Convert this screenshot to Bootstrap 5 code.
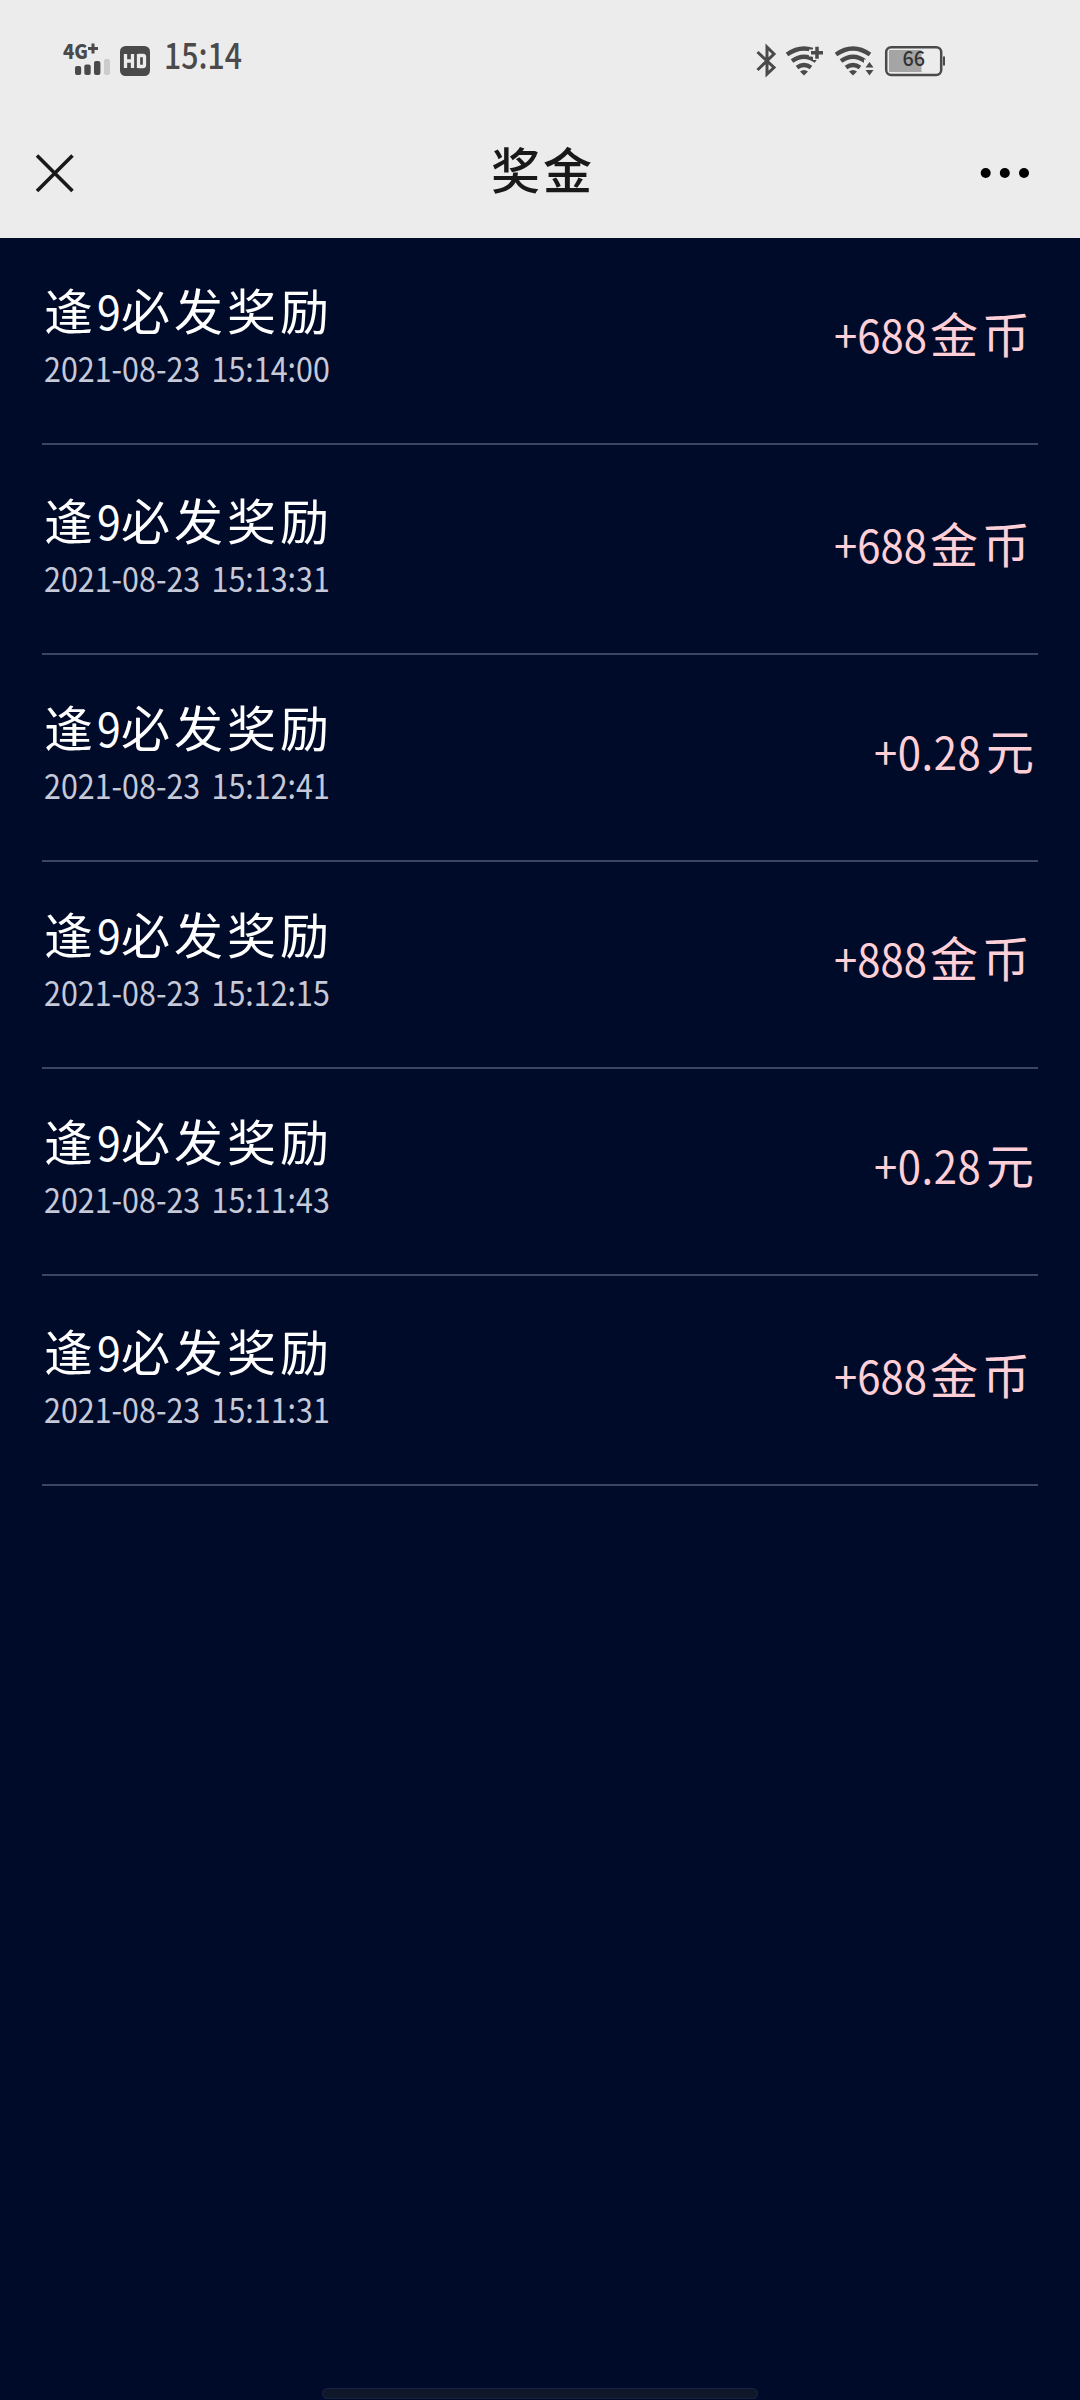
<!DOCTYPE html>
<html lang="zh-CN">
<head>
<meta charset="utf-8">
<meta name="viewport" content="width=device-width, initial-scale=1">
<title>奖金</title>
<link href="https://cdn.jsdelivr.net/npm/bootstrap@5.3.0/dist/css/bootstrap.min.css" rel="stylesheet">
<style>
body{background:#000b2a;font-family:"Noto Sans CJK SC",sans-serif;color:#fff;height:2400px;overflow:hidden}
svg{overflow:visible}
.top-area{background:#ececec;height:238px;color:#191919}
.status-row{height:120px;padding:0 135px 0 60px}
.nav-row{height:106px;padding:0 50px 0 35px}
.nav-title{font-size:49px;letter-spacing:3px;font-weight:500;line-height:60px;padding-left:32px;margin-top:-11px}
.entry{height:207px;margin:0 42px;border-bottom:2px solid #3b4460;padding-top:41px}
.entry-tall{height:210px;padding-top:44px}
.han{font-size:49px;letter-spacing:4px}
.entry-title{font-size:46px;line-height:60px;padding-left:2px}
.nine{display:inline-block;width:24px}
.nine b,.num b{display:inline-block;font-weight:400;transform:scaleX(.93);transform-origin:left}
.entry-time{font-size:34px;line-height:40px;color:#c5c9d8;margin-top:8px;padding-left:2px}
.entry-time b{display:inline-block;font-weight:400;transform-origin:left;transform:scaleX(.895);white-space:pre;word-spacing:5px}
.amount{color:#ffcfd7;font-size:45px;line-height:60px;margin-top:23px}
.amount .han{font-size:48px}
.num{display:inline-block}
.w-coin{width:96px;margin-left:-1px}
.w-coin + .han{margin-right:4px}
.w-yuan{width:112px}
.w-yuan b{letter-spacing:.6px}
.home-bar{left:323px;top:2389px;width:434px;height:9px;border-radius:5px;background:#0f172b;box-shadow:0 0 0 1px #1a2242}
</style>
<script src="https://cdn.jsdelivr.net/npm/bootstrap@5.3.0/dist/js/bootstrap.bundle.min.js"></script>
</head>
<body>
<header class="top-area">
  <div class="status-row d-flex justify-content-between">
    <svg width="190" height="120" viewBox="60 0 190 120" fill="#4a4a4a" font-family="Noto Sans CJK SC, sans-serif">
      <text x="63" y="59" font-size="20" font-weight="900" textLength="25" lengthAdjust="spacingAndGlyphs">4G</text>
      <path d="M88 48.500h10M93 43.500v10" stroke="#4a4a4a" stroke-width="3"/>
      <rect x="75" y="66" width="6.200" height="9" rx="2"/><rect x="84.300" y="64.500" width="6.400" height="10.500" rx="2"/><rect x="94" y="61" width="6.400" height="14" rx="2"/><rect x="104" y="59" width="6" height="16" rx="2" fill="#ccc"/>
      <rect x="120" y="46" width="30" height="30" rx="5.500"/>
      <path d="M125.500 54v14M132.500 54v14M126 61h6M138.500 54v14M138.500 55.500h4.500q1.500 0 1.500 1.500v8q0 1.500-1.500 1.500h-4.500" fill="none" stroke="#ececec" stroke-width="3.300"/>
      <text x="164" y="69" font-size="35.500" textLength="78" lengthAdjust="spacingAndGlyphs" font-weight="500">15:14</text>
    </svg>
    <svg width="195" height="120" viewBox="750 0 195 120" fill="none" stroke="#4a4a4a">
      <path d="M757.500 52L774 67.500L767 74V47L774 54L757.500 70" stroke-width="3"/>
      <g id="fan" stroke-width="4.300"><path d="M787 54.500Q804 42.500 821 54.500"/><path d="M792 61Q804 52.500 816 61"/><path d="M797 67.500Q804 62.500 811 67.500"/><path d="M804 75.500L800 71.500Q804 68.500 808 71.500Z" fill="#4a4a4a" stroke="none"/></g>
      <path d="M809 53h15M816.500 45v15" stroke="#ececec" stroke-width="7"/>
      <path d="M811 52.700h12M817 46.700v12" stroke-width="3.500"/>
      <use href="#fan" x="49"/>
      <path d="M864 68.500h11v-9h-11z" fill="#ececec" stroke="none"/>
      <path d="M865.500 67.500l4-5.500 4 5.500zM865.500 70h8l-4 5.500z" fill="#4a4a4a" stroke="none"/>
      <rect x="886.200" y="47.200" width="55" height="27.800" rx="5" stroke-width="2.500"/>
      <path d="M889 50h32.500v22H889z" fill="#a5a5a5" stroke="none"/>
      <path d="M944 56.500v9" stroke-width="2"/>
      <text x="902.500" y="65.500" font-family="Noto Sans CJK SC, sans-serif" font-size="20.500" font-weight="500" textLength="22.500" lengthAdjust="spacingAndGlyphs" fill="#333" stroke="none">66</text>
    </svg>
  </div>
  <div class="nav-row d-flex align-items-center justify-content-between">
    <svg width="39" height="39" viewBox="35 154 39 39" stroke="#191919" stroke-width="3.600"><path d="M37 155.500L72.500 191M72.500 155.500L37 191"/></svg>
    <div class="nav-title">奖金</div>
    <svg width="50" height="12" viewBox="980 167 50 12"><circle cx="985.700" cy="173" r="5"/><circle cx="1004.800" cy="173" r="5"/><circle cx="1024" cy="173" r="5"/></svg>
  </div>
</header>
<main>
  <div class="entry d-flex justify-content-between">
    <div><div class="entry-title"><span class="han">逢</span><span class="nine"><b>9</b></span><span class="han">必发奖励</span></div><div class="entry-time"><b>2021-08-23 15:14:00</b></div></div>
    <div class="amount"><span class="num w-coin"><b>+688</b></span><span class="han">金币</span></div>
  </div>
  <div class="entry entry-tall d-flex justify-content-between">
    <div><div class="entry-title"><span class="han">逢</span><span class="nine"><b>9</b></span><span class="han">必发奖励</span></div><div class="entry-time"><b>2021-08-23 15:13:31</b></div></div>
    <div class="amount"><span class="num w-coin"><b>+688</b></span><span class="han">金币</span></div>
  </div>
  <div class="entry d-flex justify-content-between">
    <div><div class="entry-title"><span class="han">逢</span><span class="nine"><b>9</b></span><span class="han">必发奖励</span></div><div class="entry-time"><b>2021-08-23 15:12:41</b></div></div>
    <div class="amount"><span class="num w-yuan"><b>+0.28</b></span><span class="han">元</span></div>
  </div>
  <div class="entry d-flex justify-content-between">
    <div><div class="entry-title"><span class="han">逢</span><span class="nine"><b>9</b></span><span class="han">必发奖励</span></div><div class="entry-time"><b>2021-08-23 15:12:15</b></div></div>
    <div class="amount"><span class="num w-coin"><b>+888</b></span><span class="han">金币</span></div>
  </div>
  <div class="entry d-flex justify-content-between">
    <div><div class="entry-title"><span class="han">逢</span><span class="nine"><b>9</b></span><span class="han">必发奖励</span></div><div class="entry-time"><b>2021-08-23 15:11:43</b></div></div>
    <div class="amount"><span class="num w-yuan"><b>+0.28</b></span><span class="han">元</span></div>
  </div>
  <div class="entry entry-tall d-flex justify-content-between">
    <div><div class="entry-title"><span class="han">逢</span><span class="nine"><b>9</b></span><span class="han">必发奖励</span></div><div class="entry-time"><b>2021-08-23 15:11:31</b></div></div>
    <div class="amount"><span class="num w-coin"><b>+688</b></span><span class="han">金币</span></div>
  </div>
</main>
<div class="home-bar position-absolute"></div>
</body>
</html>
